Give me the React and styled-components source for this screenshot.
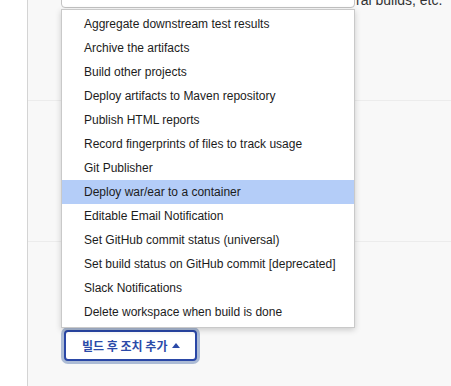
import { useState } from "react";
import styled, { createGlobalStyle } from "styled-components";

const items = [
    "Aggregate downstream test results",
    "Archive the artifacts",
    "Build other projects",
    "Deploy artifacts to Maven repository",
    "Publish HTML reports",
    "Record fingerprints of files to track usage",
    "Git Publisher",
    "Deploy war/ear to a container",
    "Editable Email Notification",
    "Set GitHub commit status (universal)",
    "Set build status on GitHub commit [deprecated]",
    "Slack Notifications",
    "Delete workspace when build is done",
];

const App = () => {
    const [active, setActive] = useState(7);

    return (
        <>
            <GlobalStyle />
            <Page>
                <Side />
                <Main>
                    <Section $h={100}>
                        <FieldRow>
                            <Field />
                            <Help>ral builds, etc.</Help>
                        </FieldRow>
                    </Section>
                    <Section $h={140} />
                    <Footer>
                        <ButtonWrap>
                            <Menu>
                                {items.map((label, i) => (
                                    <MenuItem
                                        key={label}
                                        $active={i === active}
                                        onMouseEnter={() => setActive(i)}
                                    >
                                        {label}
                                    </MenuItem>
                                ))}
                            </Menu>
                            <AddButton>
                                빌드 후 조치 추가
                                <Caret />
                            </AddButton>
                        </ButtonWrap>
                    </Footer>
                </Main>
            </Page>
        </>
    );
};

export default App;

const GlobalStyle = createGlobalStyle`
    body{
        margin: 0;
        font-family: "Liberation Sans", Arial, "Noto Sans CJK KR", sans-serif;
        overflow: hidden;
    }
`;
const Page = styled.div`
    display: flex;
    width: 451px;
    height: 386px;
    overflow: hidden;
`;
const Side = styled.div`
    width: 27px;
    background-color: #fff;
    border-right: 1px solid #d4d4d4;
`;
const Main = styled.div`
    flex: 1;
    display: flex;
    flex-direction: column;
    background-color: #f8f8f8;
`;
const Section = styled.div`
    height: ${(p) => p.$h}px;
    border-bottom: 1px solid #ececec;
`;
const FieldRow = styled.div`
    display: flex;
    align-items: flex-end;
    padding-left: 33px;
    margin-top: -23px;
`;
const Field = styled.div`
    width: 292px;
    height: 29px;
    background-color: #fff;
    border: 1px solid #c3c3c3;
    border-radius: 4px;
    flex-shrink: 0;
`;
const Help = styled.span`
    margin-left: 1px;
    margin-bottom: 0;
    font-size: 14px;
    line-height: 16px;
    color: #333;
    white-space: nowrap;
`;
const Footer = styled.div`
    padding: 88px 0 0 36px;
`;
const ButtonWrap = styled.div`
    position: relative;
    display: inline-block;
`;
const Menu = styled.ul`
    position: absolute;
    left: -3px;
    bottom: calc(100% + 2px);
    width: 292px;
    margin: 0;
    padding: 2px 0 3px;
    list-style: none;
    background-color: #fff;
    border: 1px solid #c9c9c9;
    box-shadow: 0 2px 6px rgba(0, 0, 0, 0.18);
    z-index: 10;
`;
const MenuItem = styled.li`
    height: 24px;
    line-height: 24px;
    padding-left: 22px;
    font-size: 12px;
    color: #1c1c1c;
    white-space: nowrap;
    cursor: pointer;
    background-color: ${(p) => (p.$active ? "#b4cdf8" : "transparent")};
`;
const AddButton = styled.button`
    display: flex;
    align-items: center;
    gap: 5px;
    width: 133px;
    height: 31px;
    padding: 0 0 0 16px;
    background-color: #fff;
    border: 2px solid #2a47a6;
    border-radius: 4px;
    box-shadow: 0 0 0 3px rgba(110, 136, 184, 0.55);
    font-family: "Noto Sans CJK KR", "Liberation Sans", sans-serif;
    font-size: 12px;
    font-weight: 600;
    color: #2b4aa8;
    cursor: pointer;
`;
const Caret = styled.span`
    width: 0;
    height: 0;
    border-left: 4px solid transparent;
    border-right: 4px solid transparent;
    border-bottom: 5px solid #2b4aa8;
    margin-top: -1px;
`;
